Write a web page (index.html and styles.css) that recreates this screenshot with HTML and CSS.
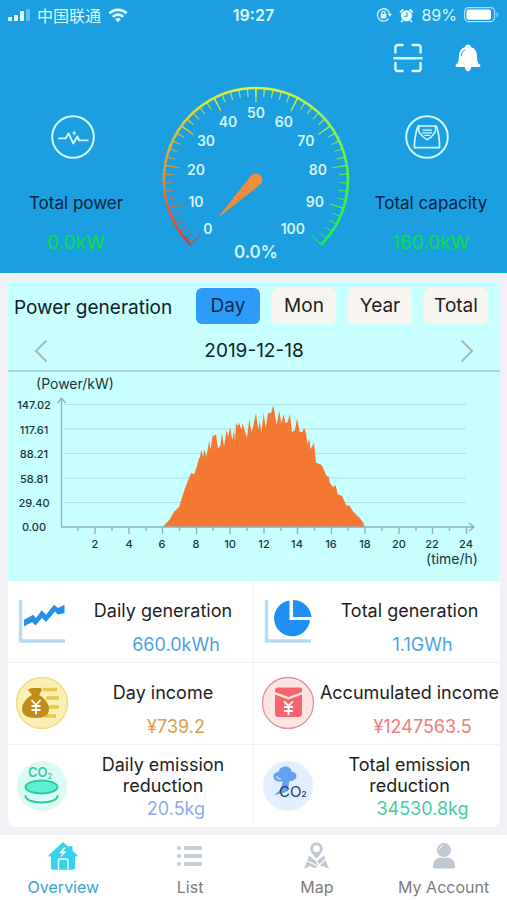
FILE: index.html
```html
<!DOCTYPE html>
<html lang="en">

<head>
  <meta charset="UTF-8">
  <meta name="viewport" content="width=device-width, initial-scale=1">
  <title>Overview</title>
  <link rel="stylesheet" href="styles.css">
</head>

<body>
  <header class="hero">
    <div class="status-bar">
      <div class="status-left">
        <svg width="22" height="14" viewBox="0 0 22 14" fill="#e4fbff">
          <rect x="0" y="9" width="4" height="4" rx="1" />
          <rect x="6" y="7" width="4" height="6" rx="1" />
          <rect x="12" y="3" width="4" height="10" rx="1" />
          <rect x="18" y="1" width="4" height="12" rx="1" opacity="0.35" />
        </svg>
        <span class="carrier">中国联通</span>
        <svg width="20" height="15" viewBox="0 0 20 15" fill="none" stroke="#e4fbff" stroke-width="2.6">
          <path d="M1.4 5.4a12.2 12.2 0 0 1 17.2 0" />
          <path d="M4.7 8.8a7.5 7.5 0 0 1 10.6 0" />
          <path d="M10 14.2l-2.8-2.9a4 4 0 0 1 5.6 0z" fill="#e4fbff" stroke="none" />
        </svg>
      </div>
      <div class="status-time">19:27</div>
      <div class="status-right">
        <svg width="16" height="16" viewBox="0 0 16 16" fill="none" stroke="#d6f6ff" stroke-width="1.3">
          <path d="M12.6 11.6a6.2 6.2 0 1 1 1.1-4.4" />
          <path d="M11.8 6.8h4l-2 3z" fill="#d6f6ff" stroke="none" />
          <rect x="4.6" y="7" width="5.8" height="4.4" rx="0.6" fill="#d6f6ff" stroke="none" />
          <path d="M5.9 7.2V5.9a1.6 1.6 0 0 1 3.2 0v1.3" />
        </svg>
        <svg width="15" height="15" viewBox="0 0 15 15">
          <circle cx="7.5" cy="7.8" r="5.6" fill="#e4fbff" />
          <path d="M1 4.4L4.4 1.4M14 4.4L10.6 1.4M3.6 12.4l-1.3 1.6M11.4 12.4l1.3 1.6" stroke="#e4fbff" stroke-width="1.8" />
          <path d="M8 4.6v3.7H5" fill="none" stroke="#1c9fe0" stroke-width="1.1" />
        </svg>
        <span>89%</span>
        <svg width="35" height="16" viewBox="0 0 35 16">
          <rect x="0.6" y="0.6" width="30" height="14" rx="4" fill="none" stroke="#a9e0fa" stroke-width="1.2" />
          <rect x="2.4" y="2.4" width="24.6" height="10.4" rx="2" fill="#fff" />
          <path d="M32.4 5v5.4q2-.8 2-2.7t-2-2.7z" fill="#7fcff5" />
        </svg>
      </div>
    </div>

    <div class="toolbar">
      <button class="icon-btn" aria-label="Scan">
        <svg width="30" height="30" viewBox="0 0 30 30" fill="none" stroke="#dcfaff" stroke-width="2.4" stroke-linecap="round" stroke-linejoin="round">
          <path d="M2.4 9.6V4.4a2.4 2.4 0 0 1 2.4-2.4h4.8M19.6 2h5.6a2.4 2.4 0 0 1 2.4 2.4v5.2M2.4 20v5.6A2.4 2.4 0 0 0 4.8 28h4.8M19.6 28h5.6a2.4 2.4 0 0 0 2.4-2.4V20M1.4 15.2h27.2" />
        </svg>
      </button>
      <button class="icon-btn" aria-label="Messages">
        <svg width="26" height="28" viewBox="0 0 26 28">
          <path d="M13 .6c-1.7 0-2.8 1-3 2.4C6.2 4.2 4.2 7.4 4 11.5 3.9 16 3.6 18.4 1 20.8c-.9.9-.5 2.2.8 2.2h8c.3 2.2 1.5 4.4 3.2 4.4s2.9-2.2 3.2-4.4h8c1.3 0 1.7-1.3.8-2.2-2.6-2.4-2.9-4.8-3-9.3-.2-4.1-2.2-7.3-6-8.5-.2-1.4-1.3-2.4-3-2.4z" fill="#fff" />
          <path d="M6.4 11.6c.2-3 1.4-4.8 3.4-5.9" fill="none" stroke="#1c9fe0" stroke-width="1" stroke-linecap="round" />
        </svg>
      </button>
    </div>

    <div class="summary">
      <div class="stat">
        <svg class="stat-icon" width="44" height="44" viewBox="0 0 44 44" fill="none" stroke="#d4faff" stroke-width="2" stroke-linejoin="round" stroke-linecap="round">
          <circle cx="22" cy="22" r="20.8" />
          <path d="M8 23.4h6.4l3.2-5 4.6 10 4.2-7 1.6 4h8.6" stroke-width="1.9" />
          <path d="M23.6 14.6l-2.4 4.2h2.2l-1 3 3-4.2h-2.2z" fill="#d4faff" stroke="none" />
        </svg>
        <div class="stat-label">Total power</div>
        <div class="stat-value">0.0kW</div>
      </div>

      <svg class="gauge" viewBox="-104 -95 203 188">
        <defs>
          <linearGradient id="low" gradientUnits="userSpaceOnUse" x1="0" y1="66" x2="0" y2="-93">
            <stop offset="0" stop-color="#d8352c" />
            <stop offset="0.42" stop-color="#dc8a3c" />
            <stop offset="0.75" stop-color="#d9c83c" />
            <stop offset="1" stop-color="#d6f53a" />
          </linearGradient>
          <linearGradient id="high" gradientUnits="userSpaceOnUse" x1="0" y1="66" x2="0" y2="-93">
            <stop offset="0" stop-color="#1df04a" />
            <stop offset="0.5" stop-color="#5cf04a" />
            <stop offset="1" stop-color="#d6f53a" />
          </linearGradient>
        </defs>
        <g fill="none" stroke="url(#low)">
          <path d="M-65.1 65.1A92 92 0 0 1 0-92" stroke-width="2.6" />
          <path d="M-62.2 62.2A88 88 0 0 1 0-88" stroke-width="9" pathLength="50" stroke-dasharray="0.28 1.72" stroke-dashoffset="0.14" opacity="0.85" />
          <path d="M-60.1 60.1A85 85 0 0 1 0-85" stroke-width="15" pathLength="50" stroke-dasharray="0.32 9.68" stroke-dashoffset="0.16" />
        </g>
        <g fill="none" stroke="url(#high)">
          <path d="M65.1 65.1A92 92 0 0 0 0-92" stroke-width="2.6" />
          <path d="M62.2 62.2A88 88 0 0 0 0-88" stroke-width="9" pathLength="50" stroke-dasharray="0.28 1.72" stroke-dashoffset="0.14" opacity="0.85" />
          <path d="M60.1 60.1A85 85 0 0 0 0-85" stroke-width="15" pathLength="50" stroke-dasharray="0.32 9.68" stroke-dashoffset="0.16" />
        </g>
        <path d="M-38.5 38.5L-5.6-3.4A6.5 6.5 0 1 1 3.8 5.2z" fill="#f08c3e" />
        <g class="gauge-text">
          <text x="-48" y="54">0</text>
          <text x="-60" y="27">10</text>
          <text x="-60" y="-5">20</text>
          <text x="-50" y="-34">30</text>
          <text x="-28" y="-53">40</text>
          <text x="0" y="-62">50</text>
          <text x="28" y="-53">60</text>
          <text x="50" y="-34">70</text>
          <text x="62" y="-5">80</text>
          <text x="59" y="27">90</text>
          <text x="37" y="54">100</text>
        </g>
        <text class="gauge-total" x="0" y="78">0.0%</text>
      </svg>

      <div class="stat">
        <svg class="stat-icon" width="44" height="44" viewBox="0 0 44 44" fill="none" stroke="#d4faff" stroke-width="2" stroke-linejoin="round" stroke-linecap="round">
          <circle cx="22" cy="22" r="20.8" />
          <path d="M13 11h18.4c2 5.6 3.2 12.4 3.2 21.6H9.4C9.4 23.4 11 16.6 13 11z" stroke-width="1.7" />
          <path d="M14.2 11.4c-.6 2-.8 3.6-.4 5.4l4.2 5 4 3 4.4-3 4-5c.4-1.8.2-3.4-.4-5.4" stroke-width="1.4" />
          <path d="M18 15.2h8.4M17.6 17.8h9M20 20.4h4.4" stroke-width="1.3" />
        </svg>
        <div class="stat-label">Total capacity</div>
        <div class="stat-value">160.0kW</div>
      </div>
    </div>
  </header>

  <main>
    <section class="chart-card">
      <div class="chart-head">
        <h2>Power generation</h2>
        <div class="range-tabs">
          <button class="range-btn active">Day</button>
          <button class="range-btn">Mon</button>
          <button class="range-btn">Year</button>
          <button class="range-btn">Total</button>
        </div>
      </div>
      <div class="date-row">
        <button class="icon-btn" aria-label="Previous day">
          <svg width="14" height="24" viewBox="0 0 14 24" fill="none" stroke="#9fb9bd" stroke-width="2"><path d="M12.4 1.5L2 12l10.4 10.5" /></svg>
        </button>
        <span>2019-12-18</span>
        <button class="icon-btn" aria-label="Next day">
          <svg width="14" height="24" viewBox="0 0 14 24" fill="none" stroke="#9fb9bd" stroke-width="2"><path d="M1.6 1.5L12 12 1.6 22.5" /></svg>
        </button>
      </div>
      <!-- origin of the drawing is the chart's zero point -->
      <svg class="chart" viewBox="-53 -155 492 209">
        <path d="M3-122.5H405M3-98H405M3-73.5H405M3-49H405M3-24.5H405" stroke="#b0e2e6" />
        <path fill="#f47732" d="M101.7 0L109-7.7 113-15.3 118.3-20.3 120.7-28.7 124-38.7 130-53.7 133.3-53 135.7-60.3 138-68.7 139-69.7 140.3-77 142-69.7 143.3-77.7 145.3-70.3 148.3-86.3 149.7-77 151.3-90.3 155-92.7 157-78.7 159.3-81 161-93.7 163-80.3 165.7-97 167.3-90.3 169-100.3 171.3-87 173-97 174-86.3 175-103.7 177-101 178.3-104.3 180.3-97 181.7-103.7 184-95.3 186-89.3 188.3-107 190.7-94 195-113.7 197.3-97 198.7-107 200.3-94.3 202.7-113.7 204.7-98.7 207-114.3 210-113.7 212.3-122 215.7-102 218.3-116.3 220.3-103.7 222.7-113 224.3-104.3 226.3-104.3 229-112.7 231-94.7 234-97 236-108.7 238.7-95.3 241.3-94.7 243-99.3 245-93.7 246.7-82 248-88.7 249.7-77.7 253-84.3 255-64.3 260.7-62 265.7-51 268-50.3 269-43.7 272.3-39.7 274.7-42 276.7-32.7 281-31 285.7-21 288-22 292.3-15.3 299-8.7 302.3-4.3 304 0z" />
        <g fill="none" stroke="#8fb3b8" stroke-width="1.4">
          <path d="M.5-128V0H412M-3.5-124L.5-129l4 5M408-4l5 4-5 4" />
          <path d="M34 0v7M68 0v7M101.5 0v7M135.5 0v7M169 0v7M203 0v7M236.5 0v7M270.5 0v7M304 0v7M338 0v7M371.5 0v7M405.5 0v7" />
          <path d="M17 0v4M51 0v4M85 0v4M118.5 0v4M152 0v4M186 0v4M220 0v4M253.5 0v4M287 0v4M321 0v4M355 0v4M388.5 0v4" />
        </g>
        <g class="axis-label">
          <text x="-27" y="-118">147.02</text>
          <text x="-27" y="-93">117.61</text>
          <text x="-27" y="-69">88.21</text>
          <text x="-27" y="-44">58.81</text>
          <text x="-27" y="-20">29.40</text>
          <text x="-27" y="4">0.00</text>
          <text x="34" y="21">2</text>
          <text x="68" y="21">4</text>
          <text x="101" y="21">6</text>
          <text x="135" y="21">8</text>
          <text x="169" y="21">10</text>
          <text x="203" y="21">12</text>
          <text x="236" y="21">14</text>
          <text x="270" y="21">16</text>
          <text x="304" y="21">18</text>
          <text x="338" y="21">20</text>
          <text x="371" y="21">22</text>
          <text x="405" y="21">24</text>
        </g>
        <g class="axis-title">
          <text x="14" y="-138">(Power/kW)</text>
          <text x="391" y="37">(time/h)</text>
        </g>
      </svg>
    </section>

    <section class="totals">
      <div class="total">
        <svg class="total-icon" width="54" height="54" viewBox="0 0 54 54">
          <path d="M5.5 6v41H50" fill="none" stroke="#b5dcf8" stroke-width="3.4" />
          <path d="M9 25.7L18.3 20.7 21 24 26.7 16.3 31 20.7 39 10.7 43 14 49.5 10.7V19L43 20.5 40 17.5 31 28 27 24 20.5 31.5 17 28 9 32.5z" fill="#2590ea" />
        </svg>
        <div class="total-text">
          <div class="total-label">Daily generation</div>
          <div class="total-value blue">660.0kWh</div>
        </div>
      </div>
      <div class="total">
        <svg class="total-icon" width="54" height="54" viewBox="0 0 54 54">
          <path d="M5.5 6v41H50" fill="none" stroke="#b5dcf8" stroke-width="3.4" />
          <path d="M28.5 6.5A18 18 0 1 0 49 26H28.5z" fill="#1f8ff2" />
          <path d="M32 6v17h18.5A18.5 18.5 0 0 0 32 6z" fill="#1f8ff2" />
        </svg>
        <div class="total-text">
          <div class="total-label">Total generation</div>
          <div class="total-value blue">1.1GWh</div>
        </div>
      </div>
      <div class="total">
        <svg class="total-icon" width="54" height="54" viewBox="0 0 54 54">
          <circle cx="27" cy="27" r="25.5" fill="#fbf0b4" stroke="#efdc83" stroke-width="1.5" />
          <path d="M28 13.5h14M31 22h13M33 31h11M30 40h11" stroke="#e2c84b" stroke-width="3.4" />
          <path d="M16 12h10l1 2-3 5c6 3 10 9 10 14 0 6-4 9-13 9S7 39 7 33c0-5 4-11 10-14l-4-5z" fill="#c28c1a" />
          <path d="M16.5 24l4.5 5 4.5-5M21 29v9.5M16.5 30h9M16.5 34h9" fill="none" stroke="#fff" stroke-width="1.8" />
        </svg>
        <div class="total-text">
          <div class="total-label">Day income</div>
          <div class="total-value orange">¥739.2</div>
        </div>
      </div>
      <div class="total">
        <svg class="total-icon" width="54" height="54" viewBox="0 0 54 54">
          <circle cx="27" cy="27" r="25.5" fill="#fde4e4" stroke="#dd939c" stroke-width="1.3" />
          <path d="M14 14q0-2.5 2.5-2.5h22q2.5 0 2.5 2.5v2l-13.5 5L14 16z" fill="#f8646c" />
          <path d="M14 18.5l13.5 5 13.5-5V38q0 3-3 3H17q-3 0-3-3z" fill="#f8646c" />
          <path d="M23 25.5l4.5 4.5 4.5-4.5M27.5 30v9M23 31h9M23 35h9" fill="none" stroke="#fff" stroke-width="1.8" />
        </svg>
        <div class="total-text">
          <div class="total-label">Accumulated income</div>
          <div class="total-value red">¥1247563.5</div>
        </div>
      </div>
      <div class="total">
        <svg class="total-icon" width="54" height="54" viewBox="0 0 54 54">
          <circle cx="27" cy="27" r="25" fill="#dafaf4" />
          <text class="co2-text" x="13" y="18" fill="#32c9a5" font-size="13">CO<tspan font-size="7" dy="2">2</tspan></text>
          <path d="M10.5 37c0 3.7 7 6.5 16 6.5s16-2.8 16-6.5" fill="none" stroke="#2ec9a2" stroke-width="2" stroke-linecap="round" />
          <ellipse cx="26.5" cy="28" rx="16" ry="6.5" fill="#5ff0d2" stroke="#2ec9a2" stroke-width="2" />
        </svg>
        <div class="total-text">
          <div class="total-label">Daily emission reduction</div>
          <div class="total-value lilac">20.5kg</div>
        </div>
      </div>
      <div class="total">
        <svg class="total-icon" width="54" height="54" viewBox="0 0 54 54">
          <circle cx="27" cy="27" r="25" fill="#e2effe" />
          <path d="M19 22.5c-4 0-6.5-2-6.5-5s2.5-4.5 5-4.5c1-4 4-5.5 7-5.5s6 2 6 5c3 .3 5 2 5 4.5 0 3-3 5-7 5-1 3-1 6-1.500 10L22 34l-9 2c6-4 8-7 8.5-13.500z" fill="#62a0f2" />
          <path d="M15.5 17q1 3 4.5 3" fill="none" stroke="#d7e9ff" stroke-width="1.2" />
          <text x="18" y="38" fill="#273a70" font-size="15">CO<tspan font-size="8" font-weight="600">2</tspan></text>
        </svg>
        <div class="total-text">
          <div class="total-label">Total emission reduction</div>
          <div class="total-value green">34530.8kg</div>
        </div>
      </div>
    </section>
  </main>

  <nav class="tab-bar">
    <a href="#overview" class="tab-item active">
      <svg width="30" height="30" viewBox="0 0 30 30">
        <path d="M15 1L.6 14.2q-.4 1.3 1 1.3H3V27q0 1.8 1.8 1.8h20.4q1.8 0 1.8-1.8V15.5h1.4q1.4 0 1-1.3L24.5 9.4V5h-3.2v1.6z" fill="#36d3ec" />
        <path d="M15.8 6.4l-4.6 5.8h3.2l-2.2 4.4 6.4-6h-3.4l2.6-4.2z" fill="#fff" />
        <path d="M10.5 28V19.5q0-1.5 1.5-1.5h6.5q1.5 0 1.5 1.5V28" fill="none" stroke="#fff" stroke-width="1.4" />
      </svg>
      <span>Overview</span>
    </a>
    <a href="#list" class="tab-item">
      <svg width="30" height="30" viewBox="0 0 30 30" fill="#c6cdd6">
        <rect x="2" y="5" width="4" height="4" rx="2" />
        <rect x="2" y="13" width="4" height="4" rx="2" />
        <rect x="2" y="21" width="4" height="4" rx="2" />
        <rect x="9" y="5" width="18" height="4" rx="1" />
        <rect x="9" y="13" width="18" height="4" rx="1" />
        <rect x="9" y="21" width="18" height="4" rx="1" />
      </svg>
      <span>List</span>
    </a>
    <a href="#map" class="tab-item">
      <svg width="30" height="30" viewBox="0 0 30 30">
        <path d="M7 14.5l7.5 6 7.5-6 5 13.5-6-3-6.5 2.500L8 25l-6 3z" fill="#bfc8d1" />
        <path d="M4 19.5l18 8.5M24.5 17.5L13 28.5M14.5 20.5l5 7" stroke="#fff" stroke-width="1.3" />
        <path fill-rule="evenodd" d="M14.5 1.5c3.8 0 6.2 2.8 6.2 6 0 3.6-3.6 7.5-6.2 10-2.6-2.5-6.2-6.4-6.2-10 0-3.2 2.4-6 6.2-6zm0 2.800a3.400 3.400 0 1 0 0 6.800 3.400 3.400 0 0 0 0-6.800z" fill="#bfc8d1" />
      </svg>
      <span>Map</span>
    </a>
    <a href="#account" class="tab-item">
      <svg width="30" height="30" viewBox="0 0 30 30" fill="#bfc7d0">
        <path d="M4 25.5C4 19.5 8 16 15 16s11 3.5 11 9.5q0 2-2 2H6q-2 0-2-2z" />
        <circle cx="15" cy="9" r="7.5" stroke="#fff" stroke-width="1" />
        <path d="M10.5 8.5q.5-3 3-4" fill="none" stroke="#fff" stroke-width="1" stroke-linecap="round" />
      </svg>
      <span>My Account</span>
    </a>
  </nav>
</body>

</html>
```
FILE: styles.css
```css
* {
  margin: 0;
  padding: 0;
  box-sizing: border-box;
}

body {
  font-family: Inter, "Noto Sans CJK SC", sans-serif;
  background: #f0f0f5;
  min-height: 100vh;
  display: flex;
  flex-direction: column;
}

button {
  font-family: inherit;
  border: none;
  cursor: pointer;
}

svg {
  display: block;
}

/* blue top area */
.hero {
  background: #1c9fe0;
}

.status-bar {
  display: grid;
  grid-template-columns: 1fr auto 1fr;
  align-items: center;
  height: 30px;
  padding: 0 8px;
  color: #dcf8ff;
  font-size: 16px;
}

.status-left,
.status-right {
  display: flex;
  align-items: center;
  gap: 7px;
}

.status-right {
  justify-content: flex-end;
}

.status-time {
  font-weight: 600;
}

.toolbar {
  display: flex;
  justify-content: flex-end;
  align-items: center;
  gap: 32px;
  height: 55px;
  padding: 0 26px;
}

.icon-btn {
  background: none;
}

.summary {
  display: grid;
  grid-template-columns: 3fr 4fr 3fr;
}

.gauge {
  width: 100%;
}

.gauge-text,
.gauge-total {
  fill: #d2f6ff;
  font-size: 14px;
  font-weight: 600;
  text-anchor: middle;
}

.gauge-total {
  font-size: 17px;
}

.stat {
  display: flex;
  flex-direction: column;
  align-items: center;
  padding-top: 30px;
}

.stat-icon {
  margin-right: 7px;
}

.stat-label {
  margin-top: 32px;
  font-size: 17px;
  line-height: 24px;
  color: #06223c;
}

.stat-value {
  margin-top: 16px;
  font-size: 19px;
  line-height: 24px;
  color: #0be03c;
}

main {
  flex: 1;
  padding: 8px 7px 8px 8px;
}

/* chart */
.chart-card {
  background: #c8ffff;
}

.chart-head {
  display: flex;
  justify-content: space-between;
  align-items: center;
  padding: 7px 12px 0 6px;
  color: #0c2226;
}

.chart-head h2 {
  padding-top: 4px;
  font-size: 19px;
  font-weight: 400;
}

.range-tabs {
  display: flex;
  gap: 12px;
}

.range-btn {
  width: 64px;
  height: 36px;
  border-radius: 6px;
  background: #f8f5f0;
  color: #1c1c1c;
  font-size: 19px;
}

.range-btn.active {
  background: #2c9cf8;
  color: #0a2a4c;
}

.date-row {
  display: flex;
  justify-content: space-between;
  align-items: center;
  height: 48px;
  padding: 8px 26px 0;
  border-bottom: 2px solid #a8d6da;
  color: #0c2226;
  font-size: 19px;
}

.chart {
  width: 100%;
}

.axis-label,
.axis-title {
  fill: #17353a;
  font-size: 11px;
  font-weight: 500;
  text-anchor: middle;
}

.axis-title {
  font-size: 14px;
  font-weight: 400;
}

/* six totals */
.totals {
  display: grid;
  grid-template-columns: 1fr 1fr;
  background: #fff;
  border-radius: 0 0 8px 8px;
}

.total {
  display: flex;
  align-items: center;
  height: 82px;
  padding-left: 7px;
  border-bottom: 1px solid #eef2f7;
}

.total:nth-child(odd) {
  border-right: 1px solid #eef2f7;
}

.total:nth-last-child(-n+2) {
  border-bottom: none;
}

.total-icon {
  flex: none;
}

.total-text {
  flex: 1;
  padding: 3px 0 0 4px;
  text-align: center;
}

.total-label {
  display: flex;
  align-items: center;
  justify-content: center;
  height: 42px;
  font-size: 18px;
  line-height: 21px;
  color: #1e1e1e;
}

.total-value {
  padding: 2px 0 0 26px;
  font-size: 18px;
  line-height: 22px;
}

.blue {
  color: #4d9fe6;
}

.orange {
  color: #e09a4c;
}

.red {
  color: #ee7c80;
}

.lilac {
  color: #8eabea;
}

.green {
  color: #45cc9e;
}

.co2-text {
  font-weight: 600;
}

/* bottom navigation */
.tab-bar {
  display: grid;
  grid-template-columns: repeat(4, 1fr);
  background: #fff;
}

.tab-item {
  display: flex;
  flex-direction: column;
  align-items: center;
  gap: 6px;
  padding: 6px 0 3px;
  color: #7c7c7c;
  font-size: 16px;
  line-height: 20px;
  text-decoration: none;
}

.tab-item.active {
  color: #3c9fd6;
}
```
